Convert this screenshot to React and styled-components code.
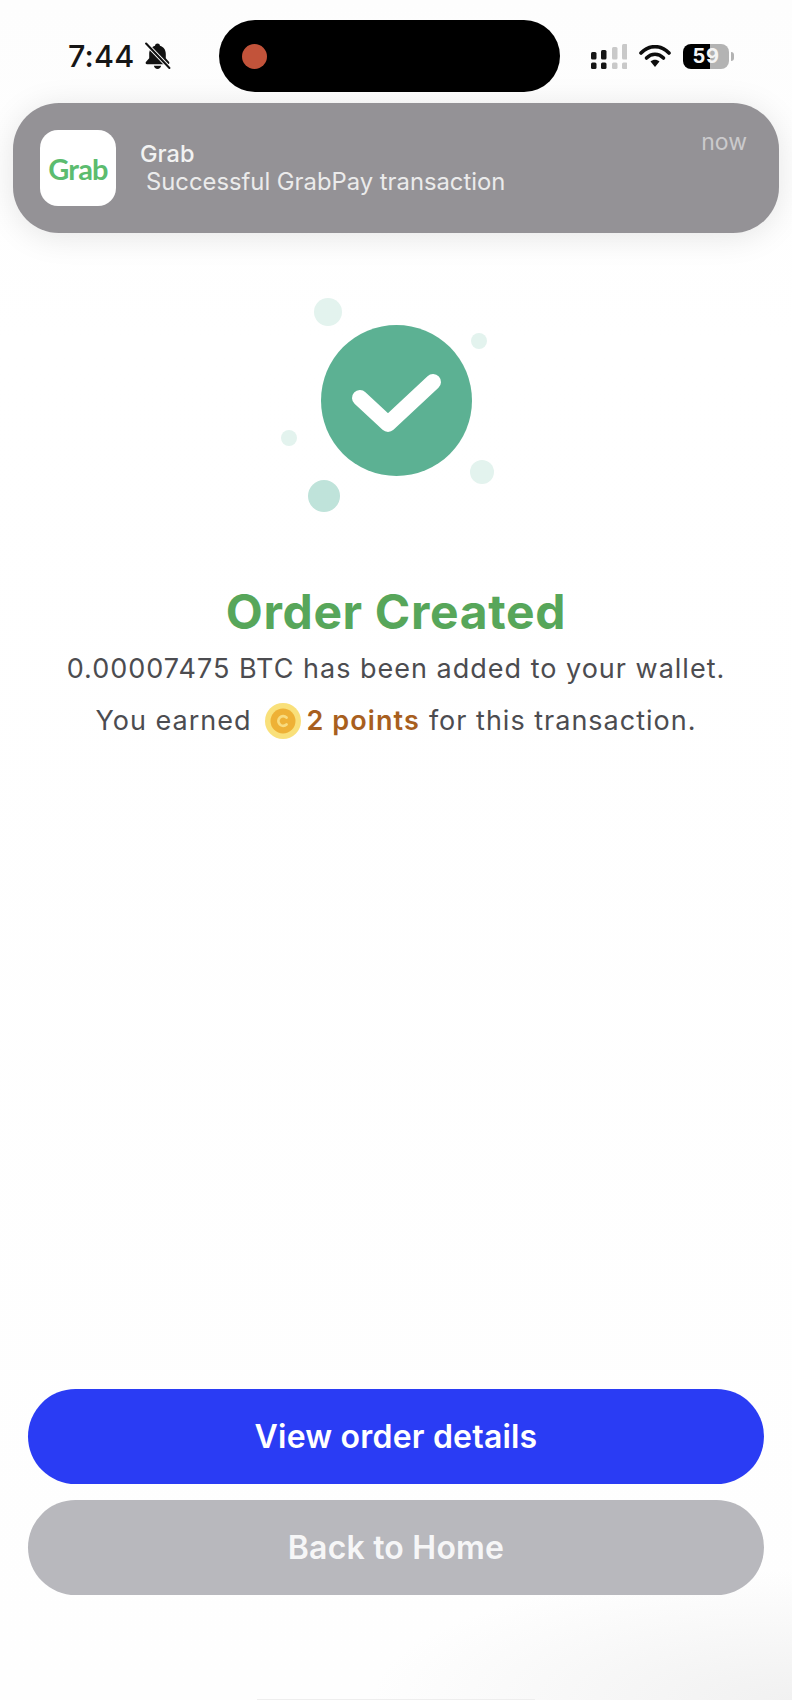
import React from "react";
import styled, { createGlobalStyle } from "styled-components";

const Global = createGlobalStyle`
  html, body { margin: 0; padding: 0; background: #fff; }
  * { box-sizing: border-box; }
`;

const Page = styled.div`
  width: 792px;
  height: 1700px;
  display: flex;
  flex-direction: column;
  overflow: hidden;
  font-family: Inter, "Liberation Sans", sans-serif;
  background:
    radial-gradient(420px 130px at 100% 100%, #f1f1f1 0%, rgba(241, 241, 241, 0) 100%),
    linear-gradient(#fdfdfd, #ffffff 20%, #fefefe);
`;

const StatusBar = styled.header`
  display: flex;
  align-items: center;
  padding: 20px 0 0 68px;
`;

const StatusLeft = styled.div`
  width: 151px;
  display: flex;
  align-items: center;
  gap: 10px;
`;

const Time = styled.span`
  font-size: 30.5px;
  line-height: 36px;
  font-weight: 500;
  letter-spacing: 0.2px;
  color: #161616;
`;

const Island = styled.div`
  width: 341px;
  height: 72px;
  border-radius: 36px;
  background: #000;
  display: flex;
  align-items: center;
  padding-left: 23px;
`;

const RecordDot = styled.span`
  width: 25px;
  height: 25px;
  border-radius: 50%;
  background: #c2533a;
`;

const StatusRight = styled.div`
  display: flex;
  align-items: center;
  margin-left: 31px;
`;

const Signal = styled.svg`
  width: 36px;
  height: 25px;
  display: block;
`;

const Wifi = styled.svg`
  width: 32px;
  height: 22px;
  display: block;
  margin: 0 12px 0 12px;
`;

const Battery = styled.div`
  position: relative;
  width: 46px;
  height: 25px;
  border-radius: 8px;
  overflow: hidden;
  background: linear-gradient(90deg, #000 59%, #b3b3b3 59%);
  display: flex;
  align-items: center;
  justify-content: center;
  font-size: 20px;
  font-weight: 700;
  color: #f4f4f4;
  letter-spacing: 0.5px;
`;

const BatteryNub = styled.span`
  width: 3px;
  height: 9px;
  margin-left: 2px;
  border-radius: 0 3px 3px 0;
  background: #b3b3b3;
`;

const Notification = styled.section`
  margin: 11px 13px 0;
  height: 130px;
  border-radius: 46px;
  background: #949296;
  box-shadow: 0 4px 32px rgba(0, 0, 0, 0.1);
  display: flex;
  align-items: center;
  padding: 0 32px 0 27px;
`;

const AppIcon = styled.div`
  width: 76px;
  height: 76px;
  flex: none;
  border-radius: 18px;
  background: #fff;
  display: flex;
  align-items: center;
  justify-content: center;
  color: #5cbc6f;
  font-family: Lato, sans-serif;
  font-size: 29px;
  font-weight: 700;
  letter-spacing: -0.8px;
`;

const NoteBody = styled.div`
  flex: 1;
  margin-left: 24px;
  display: flex;
  flex-direction: column;
`;

const NoteTitle = styled.div`
  font-size: 23.5px;
  line-height: 28px;
  font-weight: 500;
  color: #f2f2f2;
`;

const NoteText = styled.div`
  font-size: 23.8px;
  line-height: 28px;
  color: #ebebeb;
  padding-left: 6px;
`;

const NoteTime = styled.span`
  align-self: flex-start;
  margin-top: 26px;
  font-size: 23px;
  line-height: 26px;
  color: #cbcacc;
`;

const Illustration = styled.svg`
  display: block;
  align-self: center;
  width: 280px;
  height: 240px;
  margin-top: 47px;
`;

const Title = styled.h1`
  margin: 66px 0 0;
  text-align: center;
  font-size: 48px;
  line-height: 52px;
  font-weight: 700;
  letter-spacing: 0.65px;
  color: #57a65a;
`;

const Line = styled.p`
  margin: ${(p) => p.$top}px 0 0;
  display: flex;
  align-items: center;
  justify-content: center;
  font-size: 27px;
  line-height: 38px;
  letter-spacing: 1px;
  color: #4c4c50;
`;

const Coin = styled.svg`
  width: 36px;
  height: 36px;
  flex: none;
  margin: 0 5px 0 14px;
`;

const Points = styled.strong`
  font-weight: 600;
  color: #a85f1e;
  letter-spacing: 1.1px;
  margin-right: 9px;
`;

const Spacer = styled.div`
  flex: 1;
`;

const Actions = styled.div`
  display: flex;
  flex-direction: column;
  gap: 16px;
  padding: 0 28px;
`;

const ActionButton = styled.button`
  height: 95px;
  border: 0;
  border-radius: 48px;
  background: ${(p) => (p.$primary ? "#2a3cf4" : "#b8b8bd")};
  color: ${(p) => (p.$primary ? "#ffffff" : "#f6f6f7")};
  font-family: inherit;
  font-size: 32px;
  font-weight: 600;
  letter-spacing: 0.2px;
`;

const HomeIndicator = styled.div`
  width: 278px;
  height: 1px;
  margin: 104px auto 0;
  background: #eeeeee;
`;

const BellOff = () => (
  <svg width="27" height="28" viewBox="0 0 26 27" aria-hidden="true">
    <path
      d="M13 1.500c1.300 0 2.200.9 2.400 2 3.600 1 5.600 4 5.600 8v4.200l3.200 3.600c.6.9.1 2.200-1.100 2.200H2.900c-1.200 0-1.700-1.300-1.100-2.200L5 15.700v-4.200c0-4 2-7 5.600-8 .2-1.100 1.100-2 2.400-2z"
      fill="#111"
    />
    <path d="M9.500 23h7c-.3 2-1.700 3-3.500 3s-3.200-1-3.500-3z" fill="#111" />
    <path d="M2 1.500 24.500 25" stroke="#fff" strokeWidth="3.800" />
    <path d="M2 1.500 24.500 25" stroke="#111" strokeWidth="2" strokeLinecap="round" />
  </svg>
);

const signalBars = [
  { x: 0, top: 8, fill: "#161616" },
  { x: 10, top: 6, fill: "#161616" },
  { x: 21, top: 3, fill: "#c9c9c9" },
  { x: 31, top: 0, fill: "#c9c9c9" },
];

export default function App() {
  return (
    <Page>
      <Global />
      <StatusBar>
        <StatusLeft>
          <Time>7:44</Time>
          <BellOff />
        </StatusLeft>
        <Island>
          <RecordDot />
        </Island>
        <StatusRight>
          <Signal viewBox="0 0 36 25" aria-hidden="true">
            {signalBars.map((b) => (
              <g key={b.x} fill={b.fill}>
                <rect x={b.x} y={b.top} width="5.500" height={15.5 - b.top} rx="1.500" />
                <rect x={b.x} y="18.500" width="5.500" height="6.500" rx="1.500" />
              </g>
            ))}
          </Signal>
          <Wifi viewBox="0 0 32 22" aria-hidden="true">
            <path d="M2 8C10-.5 22-.5 30 8" fill="none" stroke="#0d0d0d" strokeWidth="3.600" strokeLinecap="round" />
            <path d="M7.500 13c5-5 12-5 17 0" fill="none" stroke="#0d0d0d" strokeWidth="3.600" strokeLinecap="round" />
            <path d="M11.500 16.500c2.800-2.400 6.200-2.400 9 0L16 22z" fill="#0d0d0d" />
          </Wifi>
          <Battery>59</Battery>
          <BatteryNub />
        </StatusRight>
      </StatusBar>

      <Notification>
        <AppIcon>Grab</AppIcon>
        <NoteBody>
          <NoteTitle>Grab</NoteTitle>
          <NoteText>Successful GrabPay transaction</NoteText>
        </NoteBody>
        <NoteTime>now</NoteTime>
      </Notification>

      <Illustration viewBox="256 280 280 240" aria-hidden="true">
        <circle cx="328" cy="312" r="14" fill="#e3f3ee" />
        <circle cx="479" cy="341" r="8" fill="#e3f3ee" />
        <circle cx="289" cy="438" r="8" fill="#e3f3ee" />
        <circle cx="482" cy="472" r="12" fill="#e3f3ee" />
        <circle cx="324" cy="496" r="16" fill="#bfe3da" />
        <circle cx="396.500" cy="400.500" r="75.500" fill="#5cb193" />
        <path
          d="M360 398 388 424 433 382"
          fill="none"
          stroke="#fff"
          strokeWidth="16"
          strokeLinecap="round"
          strokeLinejoin="round"
        />
      </Illustration>

      <Title>Order Created</Title>
      <Line $top={12}>0.00007475 BTC has been added to your wallet.</Line>
      <Line $top={14}>
        You earned
        <Coin viewBox="0 0 36 36" aria-hidden="true">
          <circle cx="18" cy="18" r="18" fill="#f9e07a" />
          <circle cx="18" cy="18" r="12.500" fill="#eeb136" />
          <path d="M21.500 14.500a4.800 4.800 0 1 0 0 7" fill="none" stroke="#f8dc80" strokeWidth="2.800" strokeLinecap="round" />
        </Coin>
        <Points>2 points</Points>
        for this transaction.
      </Line>

      <Spacer />

      <Actions>
        <ActionButton $primary>View order details</ActionButton>
        <ActionButton>Back to Home</ActionButton>
      </Actions>
      <HomeIndicator />
    </Page>
  );
}
